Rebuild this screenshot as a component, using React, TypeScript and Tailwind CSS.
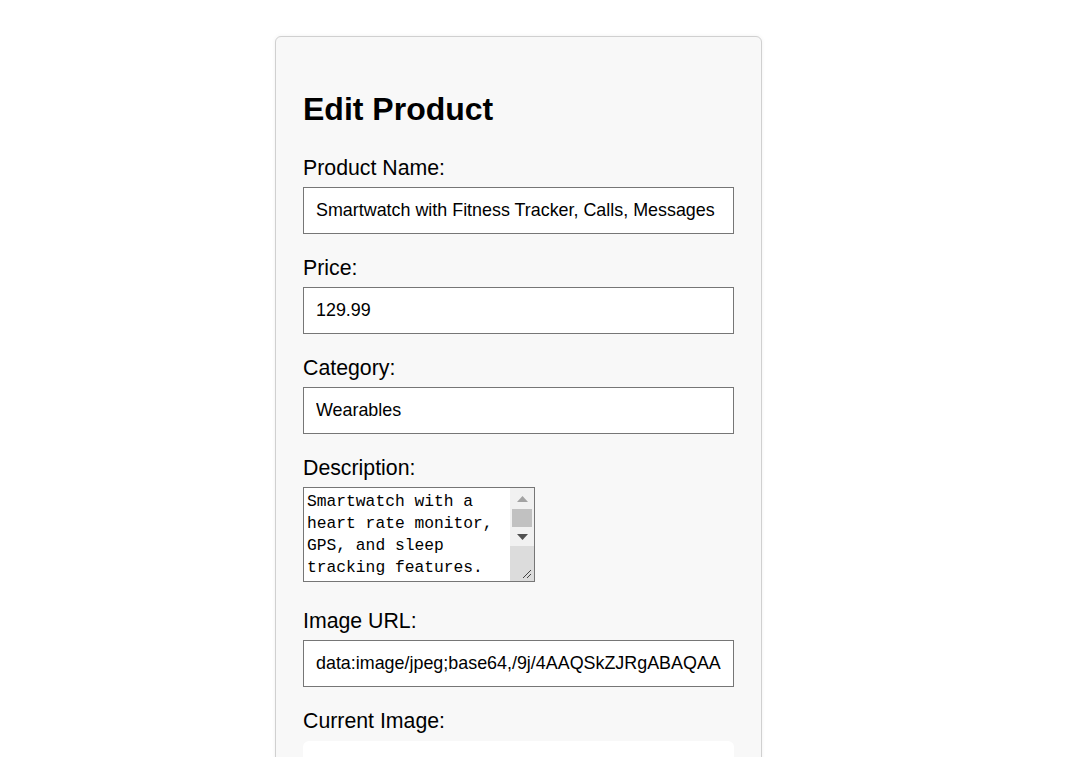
const inputClass =
  'block w-[431px] h-[47px] border border-[#767676] bg-white px-[12px] text-[17.9px] text-black outline-none';

const Label = ({ children }: { children: string }) => (
  <label className="block text-[21.3px] leading-[24.5px] text-black mb-[7px]">{children}</label>
);

const App = () => {
  return (
    <div className="h-[757px] overflow-hidden bg-white font-['Liberation_Sans',Arial,sans-serif]">
      <div className="ml-[275px] mt-[36px] w-[487px] rounded-[6px] border border-[#d0d0d0] bg-[#f8f8f8] px-[27px] pt-[27px] pb-[27px] shadow-[0_0_4px_rgba(0,0,0,0.06)]">
        <h2 className="mt-[26.5px] mb-[28px] text-[32px] leading-[37px] font-bold text-black">Edit Product</h2>

        <div className="mb-[21.5px]">
          <Label>Product Name:</Label>
          <input className={inputClass} defaultValue="Smartwatch with Fitness Tracker, Calls, Messages" />
        </div>

        <div className="mb-[21.5px]">
          <Label>Price:</Label>
          <input className={inputClass} defaultValue="129.99" />
        </div>

        <div className="mb-[21.5px]">
          <Label>Category:</Label>
          <input className={inputClass} defaultValue="Wearables" />
        </div>

        <div className="mb-[26.5px]">
          <Label>Description:</Label>
          {/* textarea with a drawn scrollbar */}
          <div className="flex w-[232px] h-[95px] border border-[#767676] bg-white">
            <textarea
              className="flex-1 resize-none overflow-hidden px-[3px] pt-[3px] font-['Liberation_Mono',monospace] text-[16.3px] leading-[21.9px] text-black outline-none"
              defaultValue="Smartwatch with a heart rate monitor, GPS, and sleep tracking features."
            />
            <div className="flex w-[24px] flex-col bg-[#f1f1f1]">
              <div className="flex h-[14px] items-end justify-center">
                <svg width="11" height="6" viewBox="0 0 11 6"><path d="M5.5 0L11 6H0z" fill="#a3a3a3" /></svg>
              </div>
              <div className="mx-[2px] mt-[7px] h-[18px] bg-[#c1c1c1]" />
              <div className="flex h-[19px] items-center justify-center">
                <svg width="11" height="6" viewBox="0 0 11 6"><path d="M0 0h11L5.5 6z" fill="#505050" /></svg>
              </div>
              <div className="flex flex-1 items-end justify-end bg-[#dcdcdc] p-[2px]">
                <svg width="12" height="12" viewBox="0 0 12 12">
                  <path d="M11 3L3 11M11 7L7 11" stroke="#444" strokeWidth="1" />
                </svg>
              </div>
            </div>
          </div>
        </div>

        <div className="mb-[21.5px]">
          <Label>Image URL:</Label>
          <input className={inputClass} defaultValue="data:image/jpeg;base64,/9j/4AAQSkZJRgABAQAA" />
        </div>

        <div>
          <Label>Current Image:</Label>
          <div className="mt-[8px] h-[200px] w-[431px] rounded-[6px] bg-white" />
        </div>
      </div>
    </div>
  );
};

export default App;
